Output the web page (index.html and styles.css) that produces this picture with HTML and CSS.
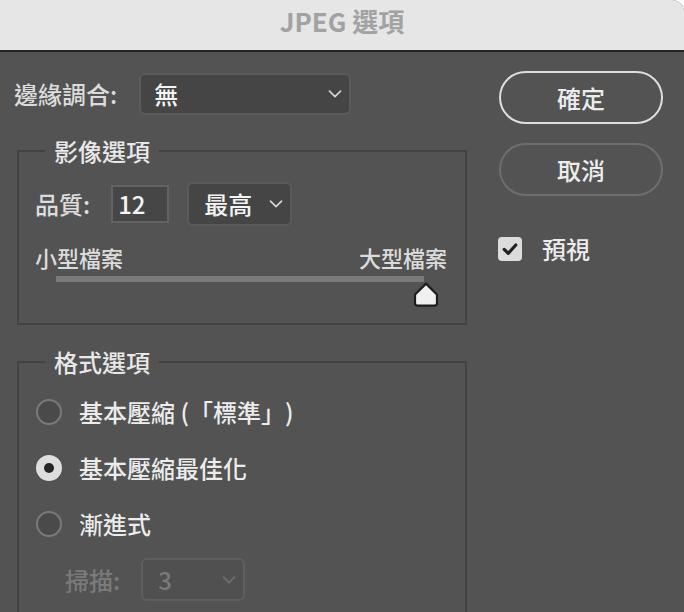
FILE: index.html
```html
<!DOCTYPE html>
<html lang="zh-Hant">
<head>
<meta charset="utf-8">
<title>JPEG 選項</title>
<link rel="stylesheet" href="styles.css">
</head>
<body>
<div class="window">
  <header class="titlebar"><h1 class="title">JPEG 選項</h1></header>
  <main class="content">
    <div class="left">
      <div class="matte-row">
        <span class="label">邊緣調合:</span>
        <div class="select select-matte">
          <span class="select-value">無</span>
          <svg class="chev" viewBox="0 0 14 8" width="14" height="8"><polyline points="1.5,1.2 7,6.6 12.5,1.2"/></svg>
        </div>
      </div>

      <fieldset class="group group-image">
        <legend class="legend">影像選項</legend>
        <div class="quality-row">
          <span class="label">品質:</span>
          <div class="num-input">12</div>
          <div class="select select-quality">
            <span class="select-value">最高</span>
            <svg class="chev" viewBox="0 0 14 8" width="14" height="8"><polyline points="1.5,1.2 7,6.6 12.5,1.2"/></svg>
          </div>
        </div>
        <div class="size-labels"><span>小型檔案</span><span>大型檔案</span></div>
        <div class="slider">
          <div class="track"></div>
          <svg class="thumb" viewBox="0 0 24 25" width="24" height="25"><path d="M12 1.6 L22.4 12 Q23 12.6 23 13.6 L23 21 Q23 23.6 20.4 23.6 L3.6 23.6 Q1 23.6 1 21 L1 13.6 Q1 12.6 1.6 12 Z"/></svg>
        </div>
      </fieldset>

      <fieldset class="group group-format">
        <legend class="legend">格式選項</legend>
        <div class="radios">
          <div class="radio-row"><span class="radio"></span><span class="radio-text">基本壓縮 (「標準」)</span></div>
          <div class="radio-row"><span class="radio checked"></span><span class="radio-text">基本壓縮最佳化</span></div>
          <div class="radio-row"><span class="radio"></span><span class="radio-text">漸進式</span></div>
        </div>
        <div class="scan-row">
          <span class="label disabled-text">掃描:</span>
          <div class="select select-scan">
            <span class="select-value">3</span>
            <svg class="chev" viewBox="0 0 14 8" width="14" height="8"><polyline points="1.5,1.2 7,6.6 12.5,1.2"/></svg>
          </div>
        </div>
      </fieldset>
    </div>

    <div class="right">
      <button class="btn btn-primary">確定</button>
      <button class="btn btn-secondary">取消</button>
      <div class="check-row">
        <span class="checkbox"><svg viewBox="0 0 24 24" width="24" height="24"><polyline points="6.2,12.4 10.2,16.4 17.8,8"/></svg></span>
        <span class="check-text">預視</span>
      </div>
    </div>
  </main>
</div>
</body>
</html>
```

FILE: styles.css
```css
html, body {
  margin: 0;
  padding: 0;
  background: #ffffff;
}

body {
  width: 684px;
  height: 612px;
  overflow: hidden;
  font-family: "Noto Sans CJK TC", "Noto Sans", sans-serif;
  font-weight: 500;
  color: #e2e2e2;
  text-spacing-trim: space-all;
}

.window {
  width: 684px;
  min-height: 612px;
  background: #535353;
  border-top-right-radius: 12px;
  overflow: hidden;
}

.titlebar {
  height: 50px;
  background: #e6e6e6;
  border-bottom: 2px solid #262626;
  display: flex;
  justify-content: center;
}

.title {
  margin: 0;
  font-size: 26px;
  line-height: 41px;
  font-weight: 700;
  color: #a2a2a2;
}

.content {
  display: flex;
  gap: 32px;
  padding: 19px 21px 0 14px;
}

.left {
  width: 453px;
  display: flex;
  flex-direction: column;
}

.right {
  width: 164px;
  display: flex;
  flex-direction: column;
}

.label {
  font-size: 24px;
  line-height: 28px;
  color: #dcdcdc;
  white-space: nowrap;
}

.matte-row {
  margin-top: 2px;
  display: flex;
  align-items: center;
  gap: 22px;
}

.select {
  box-sizing: border-box;
  display: flex;
  align-items: center;
  justify-content: space-between;
  background: #454545;
  border: 2px solid #5b5b5b;
  border-radius: 6px;
}

.select-value {
  font-size: 24px;
  line-height: 28px;
  color: #f4f4f4;
}

.chev {
  display: block;
  fill: none;
  stroke: #d4d4d4;
  stroke-width: 1.7;
  stroke-linecap: round;
  stroke-linejoin: round;
}

.select-matte {
  width: 212px;
  height: 42px;
  padding: 0 7px 0 13px;
}

.group {
  margin: 0;
  border: 2px solid #424242;
  min-width: 0;
}

.legend {
  margin-left: 10px;
  padding: 0 9px;
  font-size: 24px;
  line-height: 28px;
  color: #e8e8e8;
}

.group-image {
  margin: 22px 0 0 3px;
  width: 450px;
  box-sizing: border-box;
  padding: 17px 18px 41px 16px;
}

.quality-row {
  display: flex;
  align-items: center;
  height: 44px;
}

.num-input {
  box-sizing: border-box;
  width: 58px;
  height: 38px;
  margin-left: 21px;
  padding-left: 5px;
  background: #464646;
  border: 2px solid #636363;
  font-size: 24px;
  line-height: 34px;
  color: #f4f4f4;
}

.select-quality {
  width: 105px;
  height: 44px;
  margin-left: 18px;
  padding: 0 7px 0 15px;
}

.size-labels {
  margin-top: 18px;
  display: flex;
  justify-content: space-between;
  font-size: 22px;
  line-height: 26px;
  color: #dcdcdc;
}

.slider {
  position: relative;
  margin: 6px 23px 0 21px;
}

.track {
  height: 6px;
  background: #7a7a7a;
}

.thumb {
  position: absolute;
  right: -14px;
  top: 6px;
  display: block;
  fill: #f0f0f0;
  stroke: #1c1c1c;
  stroke-width: 2.2;
  stroke-linejoin: round;
}

.group-format {
  margin: 23px 0 0 3px;
  width: 450px;
  box-sizing: border-box;
  padding: 18px 18px 30px 16px;
}

.radios {
  display: flex;
  flex-direction: column;
  gap: 20px;
}

.radio-row {
  height: 36px;
  display: flex;
  align-items: center;
  gap: 17px;
}

.radio {
  box-sizing: border-box;
  width: 26px;
  height: 26px;
  margin-left: 1px;
  border-radius: 50%;
  border: 2px solid #7a7a7a;
  background: #4a4a4a;
  display: flex;
  align-items: center;
  justify-content: center;
}

.radio.checked {
  border-color: #dedede;
  background: #dedede;
}

.radio.checked::after {
  content: "";
  width: 10px;
  height: 10px;
  border-radius: 50%;
  background: #262626;
}

.radio-text {
  font-size: 24px;
  line-height: 28px;
  color: #ececec;
  white-space: nowrap;
}

.scan-row {
  margin-top: 16px;
  margin-left: 30px;
  display: flex;
  align-items: center;
  gap: 21px;
}

.disabled-text {
  color: #7a7a7a;
}

.select-scan {
  width: 104px;
  height: 43px;
  padding: 0 7px 0 15px;
  background: #505050;
  border-color: #5e5e5e;
}

.select-scan .select-value {
  color: #7a7a7a;
}

.select-scan .chev {
  stroke: #6e6e6e;
}

.btn {
  box-sizing: border-box;
  width: 164px;
  height: 53px;
  margin: 0;
  padding: 0;
  border-radius: 27px;
  background: transparent;
  font-family: "Noto Sans CJK TC", "Noto Sans", sans-serif;
  font-weight: 500;
  font-size: 24px;
  line-height: 28px;
  color: #ececec;
}

.btn-primary {
  border: 2px solid #dedede;
}

.btn-secondary {
  margin-top: 19px;
  border: 2px solid #6e6e6e;
}

.check-row {
  margin-top: 39px;
  display: flex;
  align-items: center;
  gap: 20px;
}

.checkbox {
  width: 24px;
  height: 24px;
  margin-left: -1px;
  border-radius: 4px;
  background: #dcdcdc;
  display: flex;
}

.checkbox svg {
  display: block;
  fill: none;
  stroke: #222222;
  stroke-width: 3.2;
  stroke-linecap: round;
  stroke-linejoin: round;
}

.check-text {
  font-size: 24px;
  line-height: 28px;
  color: #ececec;
}
```
